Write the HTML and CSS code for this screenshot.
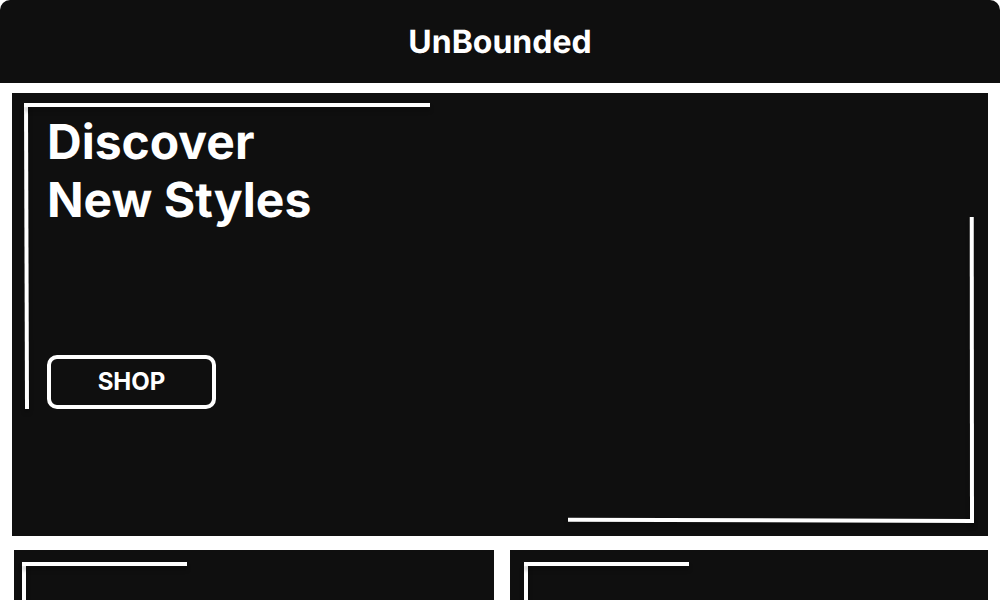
FILE: index.html
```html
<!DOCTYPE html>
<html lang="en">
<head>
<meta charset="utf-8">
<meta name="viewport" content="width=device-width, initial-scale=1">
<title>UnBounded</title>
<link rel="stylesheet" href="styles.css">
</head>
<body>
<header class="site-header">
  <h1 class="brand">UnBounded</h1>
</header>
<main class="content">
  <section class="hero">
    <span class="line line-left"></span>
    <span class="line line-top"></span>
    <span class="line line-right"></span>
    <span class="line line-bottom"></span>
    <h2 class="hero-title">Discover<br>New Styles</h2>
    <button class="shop-button" type="button">SHOP</button>
  </section>
  <section class="cards">
    <article class="card">
      <span class="line card-left"></span>
      <span class="line card-top"></span>
    </article>
    <article class="card card-inset">
      <span class="line card-left"></span>
      <span class="line card-top"></span>
    </article>
  </section>
</main>
</body>
</html>
```

FILE: styles.css
```css
* {
  box-sizing: border-box;
}

body {
  margin: 0;
  min-height: 100vh;
  display: flex;
  flex-direction: column;
  background: #fff;
  color: #fff;
  font-family: Inter, "Liberation Sans", sans-serif;
  text-rendering: geometricPrecision;
}

.site-header {
  padding: 22px 16px;
  background: #0f0f0f;
  border-radius: 10px 10px 0 0;
  text-align: center;
}

.brand {
  margin: 0;
  font-size: 32px;
  line-height: 39px;
  font-weight: 700;
}

.content {
  flex: 1;
  display: flex;
  flex-direction: column;
  gap: 14px;
  padding: 10px 12px 0;
}

.hero {
  position: relative;
  display: flex;
  flex-direction: column;
  align-items: flex-start;
  gap: 126px;
  padding: 20px 35px 127px;
  background: #0f0f0f;
}

.hero-title {
  margin: 0;
  font-size: 48px;
  line-height: 58px;
  font-weight: 700;
}

.shop-button {
  min-width: 169px;
  padding: 8px 46px;
  border: 4px solid #fff;
  border-radius: 10px;
  background: transparent;
  color: #fff;
  font-family: inherit;
  font-size: 24px;
  line-height: 30px;
  font-weight: 700;
}

.cards {
  flex: 1;
  display: grid;
  grid-template-columns: 480fr 478fr;
  gap: 16px;
  padding-left: 2px;
}

.card {
  --inset: 8px;
  position: relative;
  overflow: hidden;
  background: #0f0f0f;
}

.card-inset {
  --inset: 14px;
}

/* Decorative corner strokes */
.line {
  position: absolute;
  background: #fff;
  box-shadow: 0 4px 4px rgba(0, 0, 0, 0.25);
}

.line-top {
  top: 10px;
  left: 12px;
  width: 406px;
  height: 4px;
}

.line-left {
  top: 10px;
  left: 12px;
  width: 4px;
  height: 306px;
  transform: rotate(-0.19deg);
  transform-origin: top left;
}

.line-right {
  right: 14px;
  bottom: 13px;
  width: 4px;
  height: 306px;
  transform: rotate(-0.05deg);
  transform-origin: bottom right;
}

.line-bottom {
  right: 14px;
  bottom: 13px;
  width: 406px;
  height: 4px;
  transform: rotate(0.19deg);
  transform-origin: bottom right;
}

.card-top {
  top: 12px;
  left: var(--inset);
  width: 165px;
  height: 4px;
}

.card-left {
  top: 12px;
  bottom: 0;
  left: var(--inset);
  width: 4px;
}
```
